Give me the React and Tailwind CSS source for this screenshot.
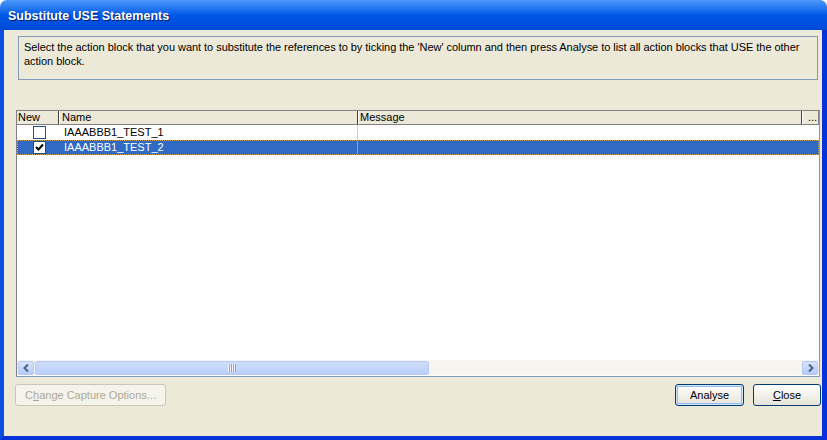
import React from 'react'

const font = { fontFamily: '"Liberation Sans", Arial, sans-serif' }

function CheckBox({ checked }) {
  return (
    <div className="w-[13px] h-[13px] border border-[#1c5180] bg-white flex items-center justify-center">
      {checked && (
        <svg width="9" height="9" viewBox="0 0 9 9">
          <path d="M1 4 L3.5 6.5 L8 1.5" fill="none" stroke="#000" strokeWidth="2" />
        </svg>
      )}
    </div>
  )
}

function XpButton({ children, disabled, isDefault, className = '' }) {
  if (disabled) {
    return (
      <div className={`h-[22px] rounded-[3px] border border-[#c9c7ba] bg-[#f5f4ea] text-[#aca899] text-[11px] flex items-center justify-center ${className}`}>
        {children}
      </div>
    )
  }
  return (
    <div className={`h-[22px] rounded-[3px] border border-[#003c74] bg-gradient-to-b from-white to-[#e6e4d8] text-black text-[11px] flex items-center justify-center ${isDefault ? 'shadow-[inset_0_0_0_1px_#cee7ff,inset_0_0_0_2px_#98b8ea]' : ''} ${className}`}>
      {children}
    </div>
  )
}

export default function App() {
  return (
    <div className="w-[827px] h-[440px] flex flex-col bg-white" style={font}>
      {/* title bar */}
      <div className="h-[30px] shrink-0 rounded-t-[7px] bg-gradient-to-b from-[#4a98fa] via-[#0058e8] to-[#0049d8] flex items-center pl-[8px] pt-[3px]">
        <span className="text-white font-bold text-[12.5px] [text-shadow:1px_1px_0_#0a1a6a]">Substitute USE Statements</span>
      </div>

      {/* body */}
      <div className="flex-1 flex flex-col bg-[#ece9d8] border-l-[4px] border-r-[5px] border-b-[4px] border-l-[#0a4fe0] border-r-[#0831d9] border-b-[#0831d9]">
        <div className="mt-[6px] ml-[14px] mr-[4px] h-[44px] border border-[#7f9db9] px-[5px] pt-[3px] text-[11px] leading-[14px] text-black whitespace-nowrap tracking-[-0.04px]">
          Select the action block that you want to substitute the references to by ticking the 'New' column and then press Analyse to list all action blocks that USE the other
          <br />
          action block.
        </div>

        {/* list */}
        <div className="mt-[30px] ml-[12px] mr-[2px] h-[267px] flex flex-col border border-t-[#808080] border-l-[#808080] border-r-[#7f9db9] border-b-[#7f9db9] bg-white">
          <div className="h-[14px] shrink-0 flex text-[11px] leading-[13px] text-black bg-[#ece9d8]">
            <div className="w-[42px] border-r border-[#404040] pl-[1px] border-b border-b-[#808080]">New</div>
            <div className="w-[299px] border-r border-[#404040] pl-[2px] border-l border-l-white border-b border-b-[#808080]">Name</div>
            <div className="w-[444px] border-r border-[#404040] pl-[1px] border-l border-l-white border-b border-b-[#808080]">Message</div>
            <div className="flex-1 border-l border-l-white pl-[5px] border-b border-b-[#808080] border-r border-r-[#808080]">...</div>
          </div>
          <div className="flex-1 flex flex-col text-[11px]">
            <div className="h-[15px] flex items-center">
              <div className="w-[42px] flex justify-center pl-[2px]"><CheckBox /></div>
              <div className="w-[299px] pl-[5px] h-full flex items-center border-r border-[#d4d0c8]">IAAABBB1_TEST_1</div>
              <div className="flex-1" />
            </div>
            <div className="h-[15px] flex items-center bg-[#316ac5] text-white border border-dotted border-[#c9a24a]">
              <div className="w-[41px] flex justify-center pl-[2px]"><CheckBox checked /></div>
              <div className="w-[299px] pl-[5px] h-full flex items-center border-r border-[#8aa6d8]">IAAABBB1_TEST_2</div>
              <div className="flex-1" />
            </div>
            <div className="flex-1" />
          </div>

          {/* horizontal scrollbar */}
          <div className="h-[15px] shrink-0 flex items-center bg-[#f6f5ef] px-[1px] gap-[1px] mb-[1px]">
            <div className="w-[16px] h-[14px] rounded-[2px] border border-[#b5c9f5] bg-gradient-to-b from-[#d8e4fc] to-[#b4cafa] flex items-center justify-center">
              <svg width="7" height="8" viewBox="0 0 7 8"><path d="M5 0.5 L1.5 4 L5 7.5" fill="none" stroke="#4d6185" strokeWidth="2" /></svg>
            </div>
            <div className="w-[394px] h-[14px] rounded-[2px] border border-[#b5c9f5] bg-gradient-to-b from-[#d0defc] to-[#bccffa] flex items-center justify-center">
              <svg width="9" height="8" viewBox="0 0 9 8">
                <path d="M0.5 0 V8 M2.5 0 V8 M4.5 0 V8 M6.5 0 V8" stroke="#eef3ff" strokeWidth="1" />
                <path d="M1.5 0 V8 M3.5 0 V8 M5.5 0 V8 M7.5 0 V8" stroke="#8aa4d8" strokeWidth="1" />
              </svg>
            </div>
            <div className="flex-1" />
            <div className="w-[16px] h-[14px] rounded-[2px] border border-[#b5c9f5] bg-gradient-to-b from-[#d8e4fc] to-[#b4cafa] flex items-center justify-center">
              <svg width="7" height="8" viewBox="0 0 7 8"><path d="M2 0.5 L5.5 4 L2 7.5" fill="none" stroke="#4d6185" strokeWidth="2" /></svg>
            </div>
          </div>
        </div>

        {/* buttons */}
        <div className="mt-[7px] ml-[11px] mr-[1px] flex items-center">
          <XpButton disabled className="w-[151px]">
            <span>C<u>h</u>ange Capture Options...</span>
          </XpButton>
          <div className="flex-1" />
          <XpButton isDefault className="w-[69px]">Analyse</XpButton>
          <XpButton className="w-[68px] ml-[9px]">
            <span><u>C</u>lose</span>
          </XpButton>
        </div>
      </div>
    </div>
  )
}
